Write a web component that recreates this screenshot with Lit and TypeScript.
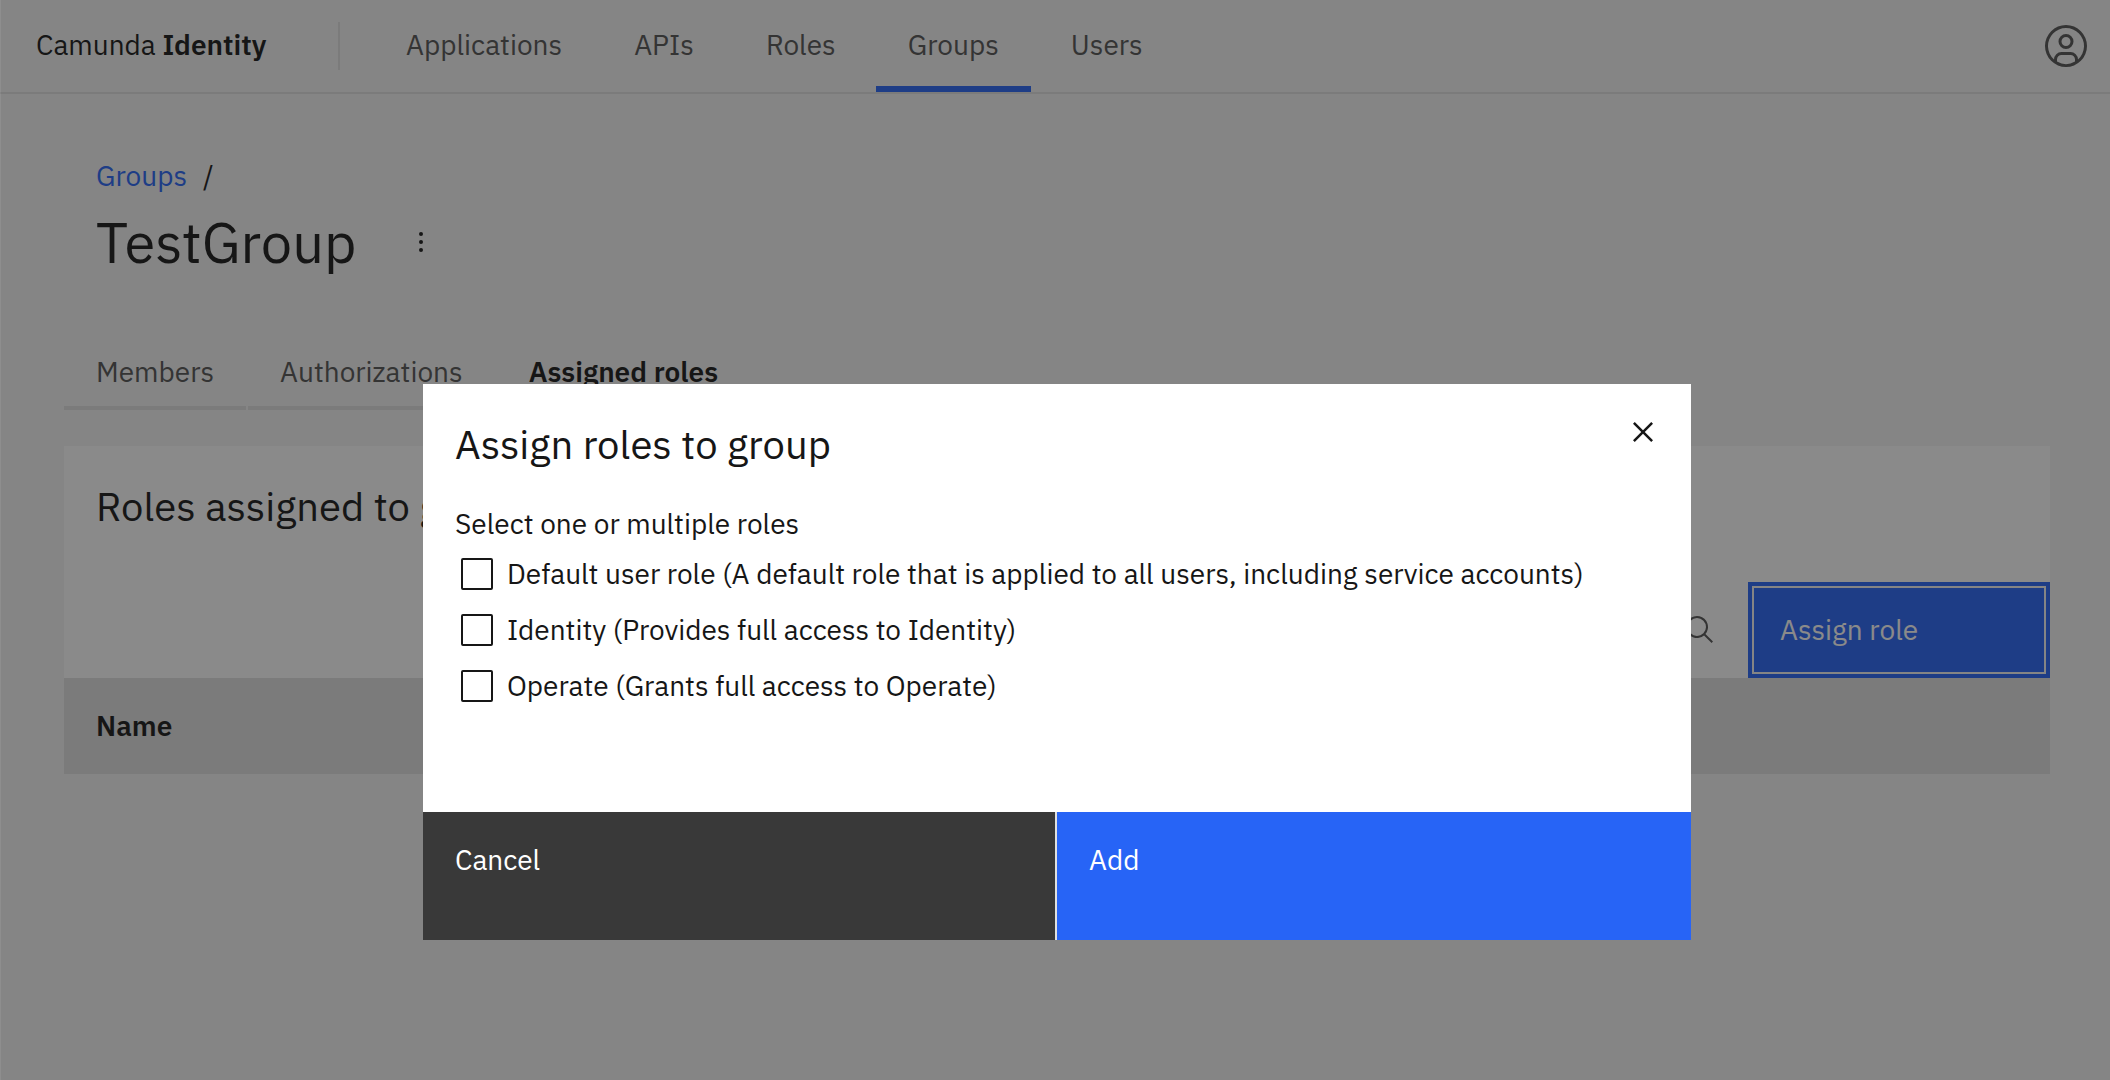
import { LitElement, html, css } from "lit";
import { customElement, state } from "lit/decorators.js";

interface Role {
  id: string;
  label: string;
}

const NAV = ["Applications", "APIs", "Roles", "Groups", "Users"];
const TABS = ["Members", "Authorizations", "Assigned roles"];
const ROLES: Role[] = [
  { id: "default", label: "Default user role (A default role that is applied to all users, including service accounts)" },
  { id: "identity", label: "Identity (Provides full access to Identity)" },
  { id: "operate", label: "Operate (Grants full access to Operate)" },
];

@customElement("app-header")
class AppHeader extends LitElement {
  static styles = css`
    :host { display: block; }
    .bar {
      display: flex;
      align-items: center;
      height: 92px;
      border-bottom: 2px solid #e0e0e0;
      padding: 0 20px 0 36px;
    }
    .brand {
      display: flex;
      align-items: center;
      box-sizing: border-box;
      width: 304px;
      height: 48px;
      padding-bottom: 2px;
      border-right: 2px solid #e0e0e0;
      color: #161616;
      text-decoration: none;
      white-space: pre;
    }
    .brand b { font-weight: 600; }
    .nav { display: flex; gap: 8px; align-self: stretch; padding-left: 34px; }
    .item {
      box-sizing: border-box;
      display: flex;
      align-items: center;
      padding: 4px 32px 0;
      border-bottom: 6px solid transparent;
      color: #525252;
      text-decoration: none;
    }
    .current { border-bottom-color: #2764f6; }
    .user {
      margin-left: auto;
      display: flex;
      padding: 0;
      border: 0;
      background: none;
      color: #525252;
    }
    .icon { width: 48px; height: 48px; fill: currentColor; }
  `;

  render() {
    return html`
      <header class="bar">
        <a class="brand" href="#">Camunda <b>Identity</b></a>
        <nav class="nav">
          ${NAV.map((n) => html`<a class="item ${n === "Groups" ? "current" : ""}" href="#${n}">${n}</a>`)}
        </nav>
        <button class="user" aria-label="Open user menu">
          <svg class="icon" viewBox="0 0 32 32" aria-hidden="true">
            <path d="M16 8a5 5 0 1 0 5 5a5 5 0 0 0-5-5Zm0 8a3 3 0 1 1 3-3a3 3 0 0 1-3 3Z" />
            <path d="M16 2A14 14 0 1 0 30 16 14.016 14.016 0 0 0 16 2ZM10 26.3765V25a3.0033 3.0033 0 0 1 3-3h6a3.0033 3.0033 0 0 1 3 3v1.3765a11.8989 11.8989 0 0 1-12 0Zm13.9925-1.4507A5.0016 5.0016 0 0 0 19 20H13a5.0016 5.0016 0 0 0-4.9925 4.9258 12 12 0 1 1 15.985 0Z" />
          </svg>
        </button>
      </header>
    `;
  }
}

@customElement("assign-dialog")
class AssignDialog extends LitElement {
  @state() private picked = new Set<string>();

  static styles = css`
    :host { display: block; background: #fff; color: #161616; }
    .head { display: flex; justify-content: space-between; height: 96px; }
    .title { margin: 0; padding: 32px 0 0 32px; font-size: 40px; line-height: 56px; font-weight: 400; }
    .close {
      width: 96px;
      height: 96px;
      padding: 0;
      border: 0;
      background: none;
      display: grid;
      place-items: center;
      color: #161616;
    }
    .icon { width: 40px; height: 40px; fill: currentColor; }
    .legend { padding: 24px 32px 0; line-height: 40px; }
    .choices {
      padding: 10px 32px 106px;
      display: flex;
      flex-direction: column;
      gap: 16px;
    }
    .choice { display: flex; align-items: center; gap: 14px; padding-left: 6px; line-height: 40px; }
    .box {
      appearance: none;
      flex: none;
      box-sizing: border-box;
      width: 32px;
      height: 32px;
      margin: 0;
      border: 2px solid #161616;
      border-radius: 2px;
      background: #fff;
    }
    .box:checked { background: #161616; box-shadow: inset 0 0 0 6px #fff; }
    .actions { display: grid; grid-template-columns: 1fr 1fr; }
    .btn {
      height: 128px;
      padding: 28px 32px;
      border: 0;
      display: flex;
      align-items: flex-start;
      font: inherit;
      line-height: 40px;
      color: #fff;
    }
    .secondary { background: #393939; border-right: 2px solid #e0e0e0; }
    .primary { background: #2764f6; }
  `;

  private toggle(id: string) {
    const next = new Set(this.picked);
    if (!next.delete(id)) next.add(id);
    this.picked = next;
  }

  render() {
    return html`
      <div class="head">
        <h2 class="title">Assign roles to group</h2>
        <button class="close" aria-label="Close">
          <svg class="icon" viewBox="0 0 32 32" aria-hidden="true">
            <path d="M17.4141 16 24 9.4141 22.5859 8 16 14.5859 9.4143 8 8 9.4141 14.5859 16 8 22.5859 9.4143 24 16 17.4141 22.5859 24 24 22.5859Z" />
          </svg>
        </button>
      </div>
      <div class="legend" id="legend">Select one or multiple roles</div>
      <div class="choices" role="group" aria-labelledby="legend">
        ${ROLES.map(
          (r) => html`<label class="choice">
            <input class="box" type="checkbox" .checked=${this.picked.has(r.id)} @change=${() => this.toggle(r.id)} />
            <span>${r.label}</span>
          </label>`,
        )}
      </div>
      <div class="actions">
        <button class="btn secondary">Cancel</button>
        <button class="btn primary">Add</button>
      </div>
    `;
  }
}

@customElement("app-root")
class AppRoot extends LitElement {
  static styles = css`
    :host {
      display: block;
      position: relative;
      min-height: 100vh;
      background: #f4f4f4;
      color: #161616;
      font: 400 28px/40px "IBM Plex Sans", "Open Sans", "Noto Sans", sans-serif;
    }
    .intro { padding: 62px 96px 0; }
    .crumbs { display: flex; gap: 16px; }
    .link { color: #2764f6; text-decoration: none; }
    .heading { display: flex; align-items: center; gap: 32px; padding-top: 6px; }
    .name { margin: 0; font-size: 56px; line-height: 80px; font-weight: 400; }
    .menu {
      width: 64px;
      height: 64px;
      padding: 0;
      border: 0;
      background: none;
      display: grid;
      place-items: center;
      color: #161616;
    }
    .icon { width: 32px; height: 32px; fill: currentColor; }
    .tabs { display: flex; gap: 2px; padding: 48px 64px 0; }
    .tab {
      height: 80px;
      padding: 22px 32px 14px;
      border: 0;
      border-bottom: 4px solid #e0e0e0;
      background: none;
      font: inherit;
      color: #525252;
    }
    .active { border-bottom-color: #2764f6; color: #161616; font-weight: 600; }
    .panel { margin: 36px 60px 0 64px; background: #fff; }
    .caption { margin: 0; padding: 32px 32px 48px; font-size: 40px; line-height: 56px; font-weight: 400; }
    .tools { display: flex; justify-content: flex-end; align-items: center; gap: 32px; }
    .search { display: flex; padding: 0; border: 0; background: none; color: #525252; }
    .assign {
      width: 302px;
      height: 96px;
      padding: 0 28px;
      border: 4px solid #2764f6;
      box-shadow: inset 0 0 0 2px #f4f4f4;
      background: #2764f6;
      color: #fff;
      font: inherit;
      text-align: left;
    }
    .table { width: 100%; border-collapse: collapse; }
    .th { height: 96px; padding: 0 32px; background: #e0e0e0; text-align: left; font-weight: 600; }
    .veil {
      position: absolute;
      inset: 0;
      display: flex;
      justify-content: center;
      align-items: flex-start;
      padding: 384px 0 0 4px;
      background: rgba(22, 22, 22, 0.5);
      box-shadow: inset 1px 0 0 rgba(255, 255, 255, 0.08);
    }
    .dialog { width: calc(60vw + 2px); }
  `;

  render() {
    return html`
      <app-header></app-header>
      <main>
        <div class="intro">
          <nav class="crumbs"><a class="link" href="#groups">Groups</a><span>/</span></nav>
          <div class="heading">
            <h1 class="name">TestGroup</h1>
            <button class="menu" aria-label="Group actions">
              <svg class="icon" viewBox="0 0 32 32" aria-hidden="true">
                <circle cx="16" cy="8" r="2" /><circle cx="16" cy="16" r="2" /><circle cx="16" cy="24" r="2" />
              </svg>
            </button>
          </div>
        </div>
        <div class="tabs" role="tablist">
          ${TABS.map((t, i) => html`<button class="tab ${i === 2 ? "active" : ""}" role="tab" aria-selected=${i === 2}>${t}</button>`)}
        </div>
        <section class="panel">
          <h2 class="caption">Roles assigned to group</h2>
          <div class="tools">
            <button class="search" aria-label="Search">
              <svg class="icon" viewBox="0 0 32 32" aria-hidden="true">
                <path d="M29 27.5859l-7.5521-7.5521a11.0177 11.0177 0 1 0-1.4141 1.4141L27.5859 29ZM4 13a9 9 0 1 1 9 9a9.01 9.01 0 0 1-9-9Z" />
              </svg>
            </button>
            <button class="assign">Assign role</button>
          </div>
          <table class="table">
            <thead><tr><th class="th" scope="col">Name</th></tr></thead>
          </table>
        </section>
      </main>
      <div class="veil"><assign-dialog class="dialog" role="dialog" aria-modal="true"></assign-dialog></div>
    `;
  }
}
